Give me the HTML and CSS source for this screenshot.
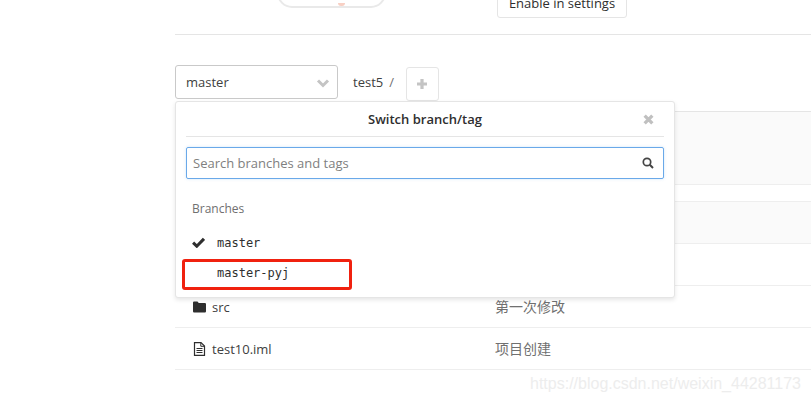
FILE: index.html
```html
<!DOCTYPE html>
<html lang="en">
<head>
<meta charset="utf-8">
<title>test5</title>
<link rel="stylesheet" href="styles.css">
</head>
<body>
<main class="page">
  <header class="top">
    <div class="pill"><span class="pill-dot"></span></div>
    <a class="enable">Enable in settings</a>
  </header>
  <div class="toolbar">
    <div class="select">
      <span>master</span>
      <svg class="chev" viewBox="0 0 14 10"><path d="M2 2.500l5 5 5-5" fill="none" stroke="#c4c4c4" stroke-width="3"/></svg>
    </div>
    <span class="crumb">test5</span>
    <span class="slash">/</span>
    <div class="plus">
      <svg viewBox="0 0 12 12"><path d="M6 1v10M1 6h10" stroke="#c4c4c4" stroke-width="3.200" fill="none"/></svg>
    </div>
  </div>
  <section class="table">
    <div class="band band-a"></div>
    <div class="gap"></div>
    <div class="band band-b"></div>
    <div class="row"></div>
    <div class="row">
      <div class="name">
        <svg class="ficon" viewBox="0 0 14 12"><path d="M1.400 0h3.400l1.400 1.700h6.400c.8 0 1.400.6 1.400 1.400v7.500c0 .8-.6 1.400-1.400 1.400H1.400C.6 12 0 11.400 0 10.600V1.400C0 .6.6 0 1.400 0z" fill="#2e2e2e"/></svg>
        <span>src</span>
      </div>
      <div class="msg">第一次修改</div>
    </div>
    <div class="row">
      <div class="name">
        <svg class="ficon file" viewBox="0 0 12 14"><path d="M1 .6h6.500L11 4v9.400H1z" fill="none" stroke="#2e2e2e" stroke-width="1.200"/><path d="M7.300.8v3.500h3.500M3 6.500h6M3 8.500h6M3 10.500h6" fill="none" stroke="#2e2e2e"/></svg>
        <span>test10.iml</span>
      </div>
      <div class="msg">项目创建</div>
    </div>
  </section>
  <div class="dropdown">
    <div class="dd-head">
      <span>Switch branch/tag</span>
      <svg class="close" viewBox="0 0 10 10"><path d="M1.500 1.500l7 7M8.500 1.500l-7 7" stroke="#c0c0c0" stroke-width="3" fill="none"/></svg>
    </div>
    <div class="search">
      <span>Search branches and tags</span>
      <svg viewBox="0 0 12 12"><circle cx="5" cy="5" r="3.700" fill="none" stroke="#444" stroke-width="1.700"/><path d="M7.800 7.800l3.200 3.200" stroke="#444" stroke-width="2"/></svg>
    </div>
    <div class="dd-label">Branches</div>
    <ul class="branches">
      <li>
        <svg viewBox="0 0 12 10"><path d="M1 5.200l3.400 3.200L11 1.600" fill="none" stroke="#2e2e2e" stroke-width="2.800"/></svg>
        <span>master</span>
      </li>
      <li><span>master-pyj</span></li>
    </ul>
    <div class="mark"></div>
  </div>
  <div class="watermark">https://blog.csdn.net/weixin_44281173</div>
</main>
</body>
</html>
```
FILE: styles.css
```css
* { box-sizing: border-box; }
html, body { margin: 0; height: 100%; overflow: hidden; background: #fff; }
body {
  font-family: "Open Sans", "Noto Sans CJK SC", sans-serif;
  font-size: 13px;
  color: #2e2e2e;
}
.page { position: relative; height: 402px; padding-left: 175px; }

.top {
  height: 35px;
  border-bottom: 1px solid #e5e5e5;
  display: flex;
  align-items: flex-end;
  padding-left: 102px;
  overflow: hidden;
}
.pill {
  width: 109px;
  height: 30px;
  margin-bottom: 26px;
  border: 2px solid #e9e9e9;
  border-radius: 18px;
  position: relative;
}
.pill-dot {
  position: absolute;
  left: 59px;
  bottom: 0;
  width: 7px;
  height: 3px;
  border-radius: 0 0 4px 4px;
  background: #f8d0c4;
}
.enable {
  margin-left: 111px;
  margin-bottom: 16px;
  width: 130px;
  height: 30px;
  border: 1px solid #e5e5e5;
  border-radius: 3px;
  text-align: center;
  line-height: 20px;
  padding-top: 4px;
}

.toolbar {
  display: flex;
  align-items: flex-start;
  margin-top: 30px;
  height: 46px;
}
.select {
  width: 163px;
  height: 34px;
  border: 1px solid #c9c9c9;
  border-radius: 3px;
  padding: 0 7px 0 10px;
  display: flex;
  align-items: center;
  justify-content: space-between;
  color: #404040;
}
.chev { width: 14px; height: 10px; margin-top: 2px; }
.crumb { margin-left: 15px; line-height: 34px; color: #404040; }
.slash { margin-left: 6px; line-height: 34px; color: #707070; }
.plus {
  margin: 2px 0 0 12px;
  width: 33px;
  height: 34px;
  border: 1px solid #e5e5e5;
  border-radius: 3px;
  display: flex;
  align-items: center;
  justify-content: center;
}
.plus svg { width: 12px; height: 12px; }

.table { border-top: 1px solid #e5e5e5; }
.band-a { height: 73px; background: #fafafa; border-bottom: 1px solid #eee; }
.gap { height: 17px; border-bottom: 1px solid #eee; }
.band-b { height: 42px; background: #fafafa; border-bottom: 1px solid #eee; }
.row {
  height: 42px;
  border-bottom: 1px solid #eee;
  display: flex;
  align-items: center;
  padding-left: 18px;
}
.name { width: 302px; display: flex; align-items: center; color: #404040; }
.ficon { width: 13px; height: 12px; margin-right: 6px; flex: none; }
.ficon.file { height: 14px; }
.msg { color: #707070; font-size: 14px; padding-bottom: 2px; }

.dropdown {
  position: absolute;
  left: 175px;
  top: 101px;
  width: 500px;
  height: 197px;
  padding: 0 10px;
  background: #fff;
  border: 1px solid #e5e5e5;
  border-radius: 3px;
  box-shadow: 0 2px 4px rgba(0, 0, 0, .1);
}
.dd-head {
  height: 35px;
  border-bottom: 1px solid #e5e5e5;
  display: flex;
  align-items: center;
  justify-content: center;
  position: relative;
  font-weight: 600;
  color: #2e2e2e;
}
.close { position: absolute; right: 10px; top: 12px; width: 11px; height: 11px; }
.search {
  margin-top: 10px;
  height: 32px;
  border: 1px solid #6aa9e9;
  border-radius: 2px;
  box-shadow: 0 0 3px rgba(100, 170, 235, .3);
  padding: 0 9px 0 6px;
  display: flex;
  align-items: center;
  justify-content: space-between;
  color: #808080;
}
.search svg { width: 12px; height: 12px; }
.dd-label { margin: 21px 0 0 6px; font-size: 12px; line-height: 17px; color: #707070; }
.branches { list-style: none; margin: 11px 0 0; padding: 0; }
.branches li {
  height: 30px;
  display: flex;
  align-items: center;
  padding-left: 31px;
  position: relative;
  font-family: "DejaVu Sans Mono", monospace;
  font-size: 12px;
  color: #2e2e2e;
}
.branches svg { position: absolute; left: 6px; top: 9px; width: 13px; height: 11px; }
.mark {
  position: absolute;
  left: 6px;
  top: 157px;
  width: 170px;
  height: 31px;
  border: 3px solid #f0210f;
  border-radius: 3px;
}
.watermark {
  position: absolute;
  left: 530px;
  top: 374px;
  font-family: "Liberation Sans", sans-serif;
  font-size: 16px;
  line-height: 20px;
  color: #ededed;
  white-space: nowrap;
}
```
